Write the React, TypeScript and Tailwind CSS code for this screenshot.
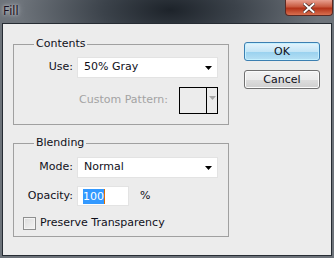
import { ReactNode } from "react";

// Small downward triangle used by the drop-down lists
const Caret = ({ className = "" }: { className?: string }) => (
  <svg width="7" height="4" viewBox="0 0 7 4" className={className}>
    <path d="M0 0h7L3.5 4z" fill="currentColor" />
  </svg>
);

const Select = ({ value }: { value: string }) => (
  <div className="flex h-[21px] w-[141px] items-center justify-between border border-[#e3e3e3] bg-white pl-[6px] pr-[5px]">
    <span>{value}</span>
    <Caret className="text-black" />
  </div>
);

const GroupBox = ({ title, children, className = "" }: { title: string; children: ReactNode; className?: string }) => (
  <div className={`relative border border-[#a0a0a0] ${className}`}>
    <span className="absolute -top-[8px] left-[20px] bg-[#ececec] px-[2px] leading-[14px]">{title}</span>
    {children}
  </div>
);

const Label = ({ children, className = "" }: { children: ReactNode; className?: string }) => (
  <span className={`w-[59px] text-right ${className}`}>{children}</span>
);

export default function App() {
  return (
    <div
      className="flex h-[258px] w-[334px] flex-col bg-[radial-gradient(ellipse_150px_60px_at_170px_10px,#1d232a_0%,#3c434b_45%,#6d737a_100%)] text-[11px] text-[#10101a]"
      style={{ fontFamily: '"DejaVu Sans", sans-serif' }}
    >
      {/* Title bar */}
      <div className="flex h-[23px] items-start justify-between pl-[3px]">
        <span
          className="mt-[4px] text-[12px] leading-[14px] text-[#1b1020] [text-shadow:0_0_6px_#c8ccd0,0_0_3px_#c8ccd0]"
          style={{ fontFamily: '"Noto Sans", sans-serif' }}
        >
          Fill
        </span>
        <div className="mr-[1px] flex h-[16px] w-[48px] items-center justify-center rounded-b-[4px] border border-t-0 border-[#5a2a24] bg-[linear-gradient(#e8a090,#c85a40_45%,#b33218_55%,#d87050)]">
          <svg width="12" height="10" viewBox="0 0 12 10">
            <path d="M1.5 1l9 8M10.5 1l-9 8" stroke="#4a2a25" strokeWidth="3.4" strokeLinecap="square" />
            <path d="M1.5 1l9 8M10.5 1l-9 8" stroke="#fff" strokeWidth="2" strokeLinecap="square" />
          </svg>
        </div>
      </div>

      {/* Client area */}
      <div className="mx-[2px] mb-[2px] flex flex-1 border border-[#262c33] bg-[#ececec] pl-[10px] pt-[20px]">
        <div className="flex w-[216px] flex-col">
          <GroupBox title="Contents" className="h-[81px]">
            <div className="mt-[12px] flex items-center gap-[4px]">
              <Label>Use:</Label>
              <Select value="50% Gray" />
            </div>
            <div className="mt-[9px] flex items-center">
              <span className="w-[154px] text-right text-[#a3a3a3]">Custom Pattern:</span>
              <div className="ml-[11px] flex h-[27px] w-[39px] border border-black">
                <div className="flex-1" />
                <div className="flex w-[11px] items-start justify-center border-l border-black pt-[8px]">
                  <Caret className="text-[#a8a8a8]" />
                </div>
              </div>
            </div>
          </GroupBox>

          <GroupBox title="Blending" className="mt-[18px] h-[94px]">
            <div className="mt-[13px] flex items-center gap-[4px]">
              <Label>Mode:</Label>
              <Select value="Normal" />
            </div>
            <div className="mt-[8px] flex items-center gap-[4px]">
              <Label>Opacity:</Label>
              <div className="flex h-[20px] w-[52px] items-center border border-[#e3e3e3] bg-white pl-[5px]">
                <span className="bg-[#3399ff] leading-[15px] text-white">100</span>
                <span className="h-[15px] w-[1px] bg-[#e07000]" />
              </div>
              <span className="ml-[7px]">%</span>
            </div>
            <div className="mt-[9px] flex items-center gap-[4px] pl-[9px]">
              <span className="h-[13px] w-[13px] border border-[#8e8f8f] bg-[linear-gradient(135deg,#dcdcdc,#f4f4f4)] shadow-[inset_0_0_0_1px_#f4f4f4]" />
              <span>Preserve Transparency</span>
            </div>
          </GroupBox>
        </div>

        <div className="ml-[15px] mt-[-2px] flex flex-col gap-[9px]">
          <button className="h-[19px] w-[76px] rounded-[3px] border border-[#3c7fb1] bg-[linear-gradient(#e5f4fc,#c4e5f6_50%,#98d1ef_51%,#b6e0f4)] leading-[15px] shadow-[inset_0_0_0_1px_#c4f0ff]">
            OK
          </button>
          <button className="h-[19px] w-[76px] rounded-[3px] border border-[#707070] bg-[linear-gradient(#f2f2f2,#ebebeb_50%,#dddddd_51%,#cfcfcf)] leading-[15px] shadow-[inset_0_0_0_1px_#fbfbfb]">
            Cancel
          </button>
        </div>
      </div>
    </div>
  );
}
